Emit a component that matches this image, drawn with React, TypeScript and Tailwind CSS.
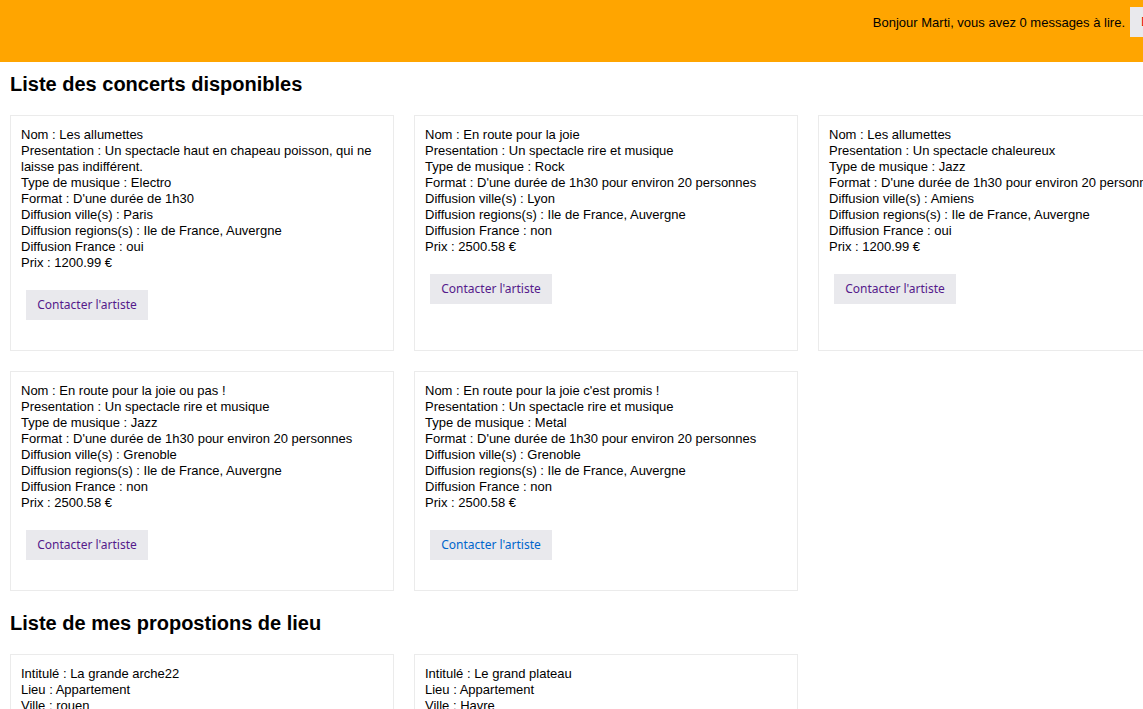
import React from 'react';

const concerts = [
  {
    nom: 'Les allumettes',
    presentation: 'Un spectacle haut en chapeau poisson, qui ne laisse pas indifférent.',
    type: 'Electro',
    format: "D'une durée de 1h30",
    ville: 'Paris',
    regions: 'Ile de France, Auvergne',
    france: 'oui',
    prix: '1200.99',
    visited: true,
  },
  {
    nom: 'En route pour la joie',
    presentation: 'Un spectacle rire et musique',
    type: 'Rock',
    format: "D'une durée de 1h30 pour environ 20 personnes",
    ville: 'Lyon',
    regions: 'Ile de France, Auvergne',
    france: 'non',
    prix: '2500.58',
    visited: true,
  },
  {
    nom: 'Les allumettes',
    presentation: 'Un spectacle chaleureux',
    type: 'Jazz',
    format: "D'une durée de 1h30 pour environ 20 personnes",
    ville: 'Amiens',
    regions: 'Ile de France, Auvergne',
    france: 'oui',
    prix: '1200.99',
    visited: true,
  },
  {
    nom: 'En route pour la joie ou pas !',
    presentation: 'Un spectacle rire et musique',
    type: 'Jazz',
    format: "D'une durée de 1h30 pour environ 20 personnes",
    ville: 'Grenoble',
    regions: 'Ile de France, Auvergne',
    france: 'non',
    prix: '2500.58',
    visited: true,
  },
  {
    nom: "En route pour la joie c'est promis !",
    presentation: 'Un spectacle rire et musique',
    type: 'Metal',
    format: "D'une durée de 1h30 pour environ 20 personnes",
    ville: 'Grenoble',
    regions: 'Ile de France, Auvergne',
    france: 'non',
    prix: '2500.58',
    visited: false,
  },
];

const lieux = [
  { intitule: 'La grande arche22', lieu: 'Appartement', ville: 'rouen' },
  { intitule: 'Le grand plateau', lieu: 'Appartement', ville: 'Havre' },
];

const Card = ({ children }: { children: React.ReactNode }) => (
  <div className="w-[384px] m-[10px] border border-[#ebebeb] px-[10px] pt-[11px] pb-[10px] bg-white">{children}</div>
);

export default function App() {
  return (
    <div className="w-[1143px] overflow-hidden bg-white text-black font-['Liberation_Sans',Arial,sans-serif] text-[13px] leading-[16px]">
      <div className="w-[1250px]">
        <header className="h-[62px] bg-[#ffa500] flex items-start justify-end pt-[7px] pr-[20px]">
          <span className="mt-[8px]">Bonjour Marti, vous avez 0 messages à lire.</span>
          <button className="ml-[5px] h-[30px] w-[100px] px-[11px] text-left bg-[#e9e9ed] text-[#ee0000] text-[12px] font-['Noto_Sans',sans-serif]">
            Déconnexion
          </button>
        </header>

        <h2 className="text-[20px] leading-[23px] font-bold ml-[10px] mt-[11px]">Liste des concerts disponibles</h2>
        <div className="flex flex-wrap mt-[9px]">
          {concerts.map((c, i) => (
            <Card key={i}>
              <div>Nom : {c.nom}</div>
              <div>Presentation : {c.presentation}</div>
              <div>Type de musique : {c.type}</div>
              <div>Format : {c.format}</div>
              <div>Diffusion ville(s) : {c.ville}</div>
              <div>Diffusion regions(s) : {c.regions}</div>
              <div>Diffusion France : {c.france}</div>
              <div>Prix : {c.prix} €</div>
              <button
                className={`mx-[5px] mt-[19px] mb-[20px] h-[30px] w-[122px] bg-[#e9e9ed] text-[12px] font-['Noto_Sans',sans-serif] ${
                  c.visited ? 'text-[#551a8b]' : 'text-[#0066cc]'
                }`}
              >
                Contacter l'artiste
              </button>
            </Card>
          ))}
        </div>

        <h2 className="text-[20px] leading-[23px] font-bold ml-[10px] mt-[11px]">Liste de mes propostions de lieu</h2>
        <div className="flex flex-wrap mt-[9px]">
          {lieux.map((l, i) => (
            <Card key={i}>
              <div>Intitulé : {l.intitule}</div>
              <div>Lieu : {l.lieu}</div>
              <div>Ville : {l.ville}</div>
              <div className="h-[120px]" />
            </Card>
          ))}
        </div>
      </div>
    </div>
  );
}
